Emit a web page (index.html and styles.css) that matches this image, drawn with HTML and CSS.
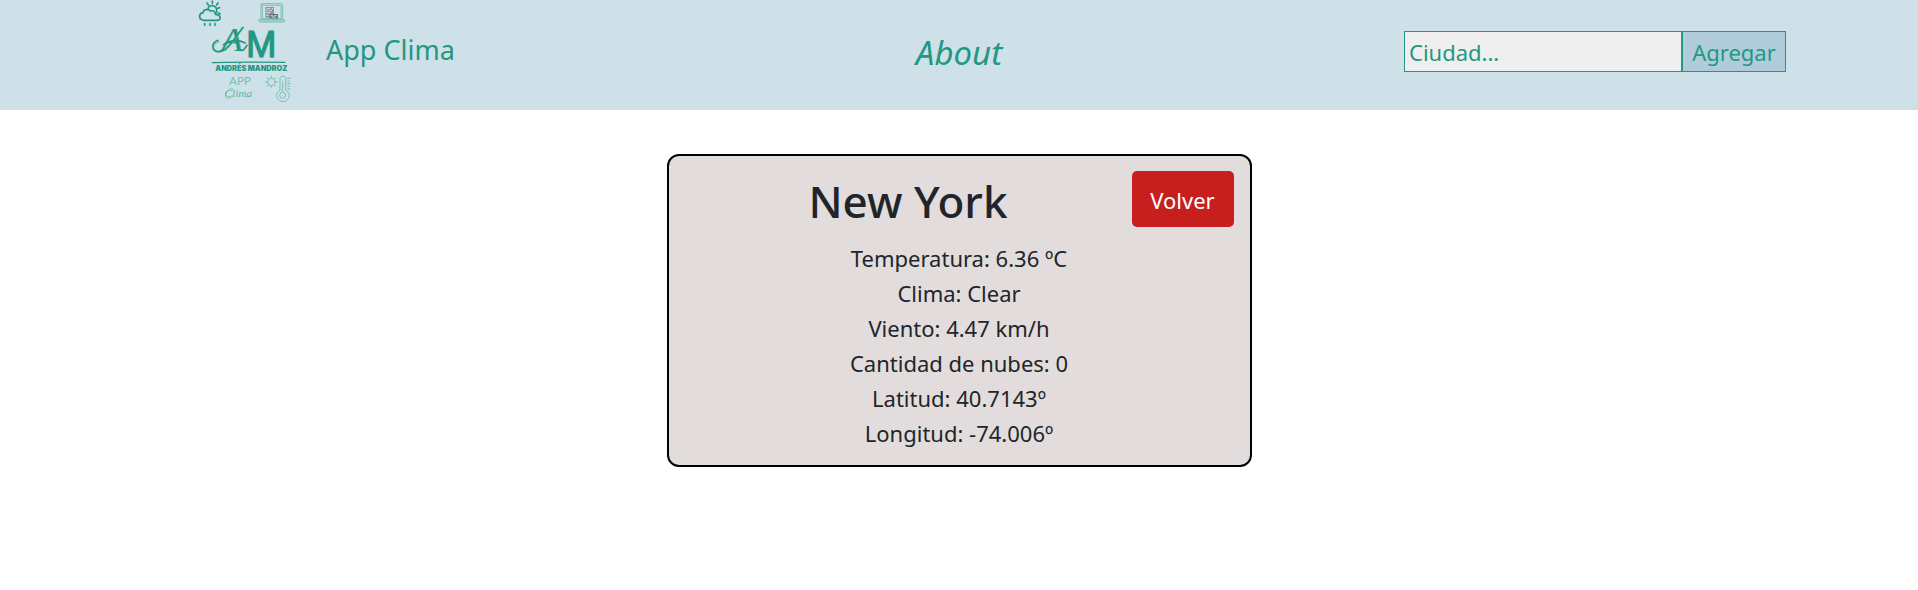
FILE: index.html
```html
<!DOCTYPE html>
<html lang="es">
<head>
<meta charset="utf-8">
<meta name="viewport" content="width=device-width, initial-scale=1">
<title>App Clima</title>
<link rel="stylesheet" href="styles.css">
</head>
<body>
<header class="navbar">
  <a class="brand" href="#">
    <svg class="logo" viewBox="0 0 330 330" role="img" aria-label="Andrés Mandroz App Clima">
      <g class="stroke-bold">
        <path d="M38 60c-12-2-13-19 1-22 1-10 16-13 22-5 9-3 15 3 15 10 18 2 18 17 7 18H40z"/>
        <path d="M54 29c-2-16 27-17 26 3 0 4-1 6-3 8M67 3v7M51 9l4 6M84 9l-4 6M89 23l-6 2M90 42l-5-3M44 71v5M60 71v5M75 71v5"/>
      </g>
      <g class="stroke-soft">
        <rect x="213" y="11" width="65" height="47" rx="3"/>
        <rect x="218" y="16" width="55" height="40"/>
        <path d="M206 59h78c1 5-2 7-7 7h-64c-5 0-8-2-7-7z" class="base"/>
      </g>
      <path class="screen" d="M226 21h26v32h-26z"/>
      <path class="screen dark" d="M239 42h25v13h-25z"/>
      <path class="pixels" d="M229 26h12M245 26h5M229 32h5M238 32h8M229 38h12M229 46h8M242 47h7M253 47h7M245 51h11"/>
      <text class="script-shadow" x="97" y="154">A</text>
      <text class="script" x="94" y="152">A</text>
      <path class="swash-shadow" d="M88 125c-23 6-22 28-3 31 28 2 47-37 75-73"/>
      <path class="swash" d="M84 121c-21 8-20 30-1 34 28 2 48-37 76-73M100 134c19-13 41-17 66-5M151 150c7 5 14-4 20-14"/>
      <text class="mono-shadow" x="171" y="174">M</text>
      <text class="mono" x="168" y="171">M</text>
      <path class="rule" d="M67 188c70-3 145-2 218-1"/>
      <text class="name" x="184" y="213">ANDRÉS MANDROZ</text>
      <text class="app" x="150" y="254">APP</text>
      <text class="clima" x="145" y="291">Clima</text>
      <path class="swash-thin" d="M130 268c-2-9-24 4-24 18 0 12 14 11 22 2M166 290c8 3 12-1 17-5"/>
      <g class="stroke-soft">
        <circle cx="244" cy="246" r="11"/>
        <path d="M244 228v4M244 260v4M226 246h4M258 246h4M231 233l3 3M254 256l3 3M231 259l3-3M254 236l3-3"/>
        <path d="M270 270v-34c0-10 17-10 17 0v34c21 13 8 35-8 35s-29-22-9-35z"/>
        <path d="M278 244v31M293 235h8M293 243h5M293 251h8M293 259h5M293 267h8"/>
        <circle cx="278" cy="286" r="9"/>
      </g>
    </svg>
    <span class="brand-name">App Clima</span>
  </a>
  <a class="about" href="#">About</a>
  <form class="search">
    <input class="field" type="text" placeholder="Ciudad..." aria-label="Ciudad">
    <button class="add" type="submit">Agregar</button>
  </form>
</header>
<main class="content">
  <article class="card">
    <div class="card-head">
      <h1 class="city">New York</h1>
      <button class="back" type="button">Volver</button>
    </div>
    <div class="details">
      <div>Temperatura: 6.36 ºC</div>
      <div>Clima: Clear</div>
      <div>Viento: 4.47 km/h</div>
      <div>Cantidad de nubes: 0</div>
      <div>Latitud: 40.7143º</div>
      <div>Longitud: -74.006º</div>
    </div>
  </article>
</main>
</body>
</html>
```
FILE: styles.css
```css
* { box-sizing: border-box; }

body {
  margin: 0;
  background: #fff;
  color: #212529;
  font-family: "Noto Sans", "Open Sans", sans-serif;
  font-size: 22px;
}

.navbar {
  display: grid;
  grid-template-columns: 1fr auto 1fr;
  align-items: center;
  background: #cee1e8;
}

.brand,
.about {
  color: #249782;
  text-decoration: none;
}

.brand {
  display: flex;
  align-items: center;
  gap: 26px;
  padding-left: 190px;
}

.logo {
  display: block;
  width: 110px;
  height: 110px;
}

.brand-name {
  padding-bottom: 12px;
  font-size: 27px;
}

.about {
  padding-bottom: 4px;
  font-size: 33px;
  font-style: italic;
  line-height: 44px;
}

.search {
  display: flex;
  justify-self: end;
  margin: 0 132px 8px 0;
}

.field,
.add {
  height: 41px;
  margin: 0;
  border: 1px solid #249782;
  border-radius: 0;
  color: #249782;
  font: inherit;
}

.field {
  width: 278px;
  padding: 4px 4px 2px;
  background: #efefef;
}

.field::placeholder {
  color: #249782;
  opacity: 1;
}

.add {
  width: 104px;
  padding: 2px 0 0;
  background: #b0ccda;
}

.content {
  display: flex;
  justify-content: center;
  padding: 44px 16px;
}

.card {
  width: 585px;
  padding: 15px 16px 14px;
  border: 2px solid #000;
  border-radius: 12px;
  background: #e2dcdc;
}

.card-head {
  display: flex;
  align-items: flex-start;
}

.city {
  flex: 1;
  margin: 0;
  font-size: 44px;
  font-weight: 500;
  line-height: 60px;
  text-align: center;
}

.back {
  width: 102px;
  height: 56px;
  padding: 2px 0 0;
  border: 0;
  border-radius: 5px;
  background: #c71f1e;
  color: #fff;
  font: inherit;
}

.details {
  padding-top: 10px;
  line-height: 35px;
  text-align: center;
}

.logo text { fill: #249782; }
.stroke-bold,
.stroke-soft,
.swash,
.swash-shadow,
.swash-thin,
.rule { fill: none; stroke: #249782; stroke-linecap: round; stroke-linejoin: round; }
.stroke-bold { stroke-width: 5; }
.stroke-soft { stroke: #79bfb5; stroke-width: 3; }
.stroke-soft .base { fill: #a8d1cf; }
.screen { fill: #89979c; }
.screen.dark { fill: #626f74; }
.pixels { fill: none; stroke: #d2e0e4; stroke-width: 3; }
.logo .script,
.logo .script-shadow { font: italic 400 104px "Liberation Serif", serif; }
.logo .mono,
.logo .mono-shadow { font: 500 109px "Liberation Sans", sans-serif; stroke: #249782; stroke-width: 3; }
.logo .script-shadow,
.logo .mono-shadow { fill: #91c79b; stroke: none; }
.swash { stroke-width: 5; }
.swash-shadow { stroke: #91c79b; stroke-width: 4; }
.swash-thin { stroke: #62b4a7; stroke-width: 2; }
.rule { stroke-width: 4; }
.logo .name { font: 900 22px Inter, sans-serif; text-anchor: middle; }
.logo .app { fill: #79bfb5; font: 35px Lato, sans-serif; text-anchor: middle; }
.logo .clima { fill: #62b4a7; font: italic 34px "Liberation Serif", serif; text-anchor: middle; }
```
